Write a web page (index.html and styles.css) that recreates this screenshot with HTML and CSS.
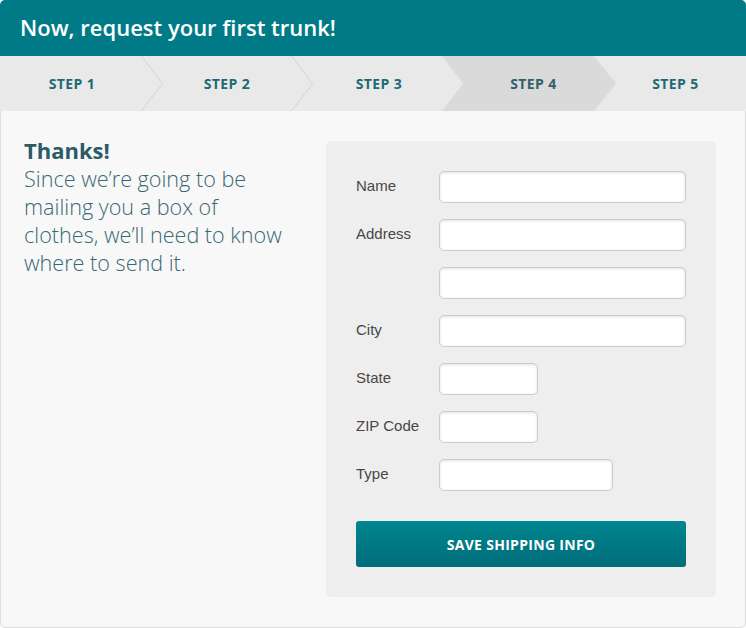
FILE: index.html
```html
<!DOCTYPE html>
<html>
<head>
<meta charset="utf-8">
<link rel="stylesheet" href="styles.css">
</head>
<body>
<div class="card">
  <header class="header">Now, request your first trunk!</header>
  <nav class="steps">
    <div class="step step-1">STEP 1<svg class="sep" width="22" height="55" viewBox="0 0 22 55"><polyline points="0.5,0 21.5,27.5 0.5,55" fill="none" stroke="#d3d3d3" stroke-width="1"/></svg></div>
    <div class="step step-2">STEP 2<svg class="sep" width="22" height="55" viewBox="0 0 22 55"><polyline points="0.5,0 21.5,27.5 0.5,55" fill="none" stroke="#d3d3d3" stroke-width="1"/></svg></div>
    <div class="step step-3">STEP 3</div>
    <div class="step step-4 active"><span class="label">STEP 4</span></div>
    <div class="step step-5">STEP 5</div>
  </nav>
  <main class="main">
    <section class="intro">
      <h2 class="intro-title">Thanks!</h2>
      <p class="intro-text">Since we’re going to be mailing you a box of clothes, we’ll need to know where to send it.</p>
    </section>
    <form class="panel">
      <div class="fields">
        <label class="field-label">Name</label><input class="input" type="text">
        <label class="field-label">Address</label><input class="input" type="text">
        <span class="field-label"></span><input class="input" type="text">
        <label class="field-label">City</label><input class="input" type="text">
        <label class="field-label">State</label><input class="input input-sm" type="text">
        <label class="field-label">ZIP Code</label><input class="input input-sm" type="text">
        <label class="field-label">Type</label><input class="input input-md" type="text">
      </div>
      <button class="btn" type="button">SAVE SHIPPING INFO</button>
    </form>
  </main>
</div>
</body>
</html>
```

FILE: styles.css
```css
html, body {
  margin: 0;
  padding: 0;
  background: #ffffff;
}

.card {
  width: 746px;
  height: 628px;
  display: flex;
  flex-direction: column;
  font-family: "Open Sans", "DejaVu Sans", sans-serif;
}

.header {
  height: 56px;
  box-sizing: border-box;
  padding: 13px 20px 15px;
  background: #007a87;
  color: #ffffff;
  font-size: 22px;
  line-height: 28px;
  font-weight: 600;
  border-radius: 5px 5px 0 0;
}

.steps {
  display: flex;
  height: 55px;
  background: #e9e9e9;
}

.step {
  position: relative;
  box-sizing: border-box;
  height: 55px;
  line-height: 55px;
  text-align: center;
  font-size: 14px;
  font-weight: 700;
  letter-spacing: 0.4px;
  color: #1d6a76;
}

.step-1 { width: 152px; padding-right: 8px; }
.step-2 { width: 150px; }
.step-3 { width: 150px; padding-left: 4px; }
.step-4 { width: 153px; padding-left: 10px; }
.step-5 { flex: 1; }

.sep {
  position: absolute;
  top: 0;
  right: -11px;
  z-index: 1;
}

.step.active {
  color: #33606a;
}

.step.active::before {
  content: "";
  position: absolute;
  top: 0;
  bottom: 0;
  left: -10px;
  right: -11px;
  background: #dadada;
  clip-path: polygon(0 0, 152px 0, 174px 27.5px, 152px 55px, 0 55px, 21px 27.5px);
}

.step.active .label {
  position: relative;
}

.main {
  flex: 1;
  display: flex;
  align-items: flex-start;
  background: #f8f8f8;
  border: 1px solid #dddddd;
  border-top: none;
  border-radius: 0 0 5px 5px;
  padding: 0 29px 0 23px;
}

.intro {
  width: 302px;
  padding-top: 24px;
}

.intro-title {
  margin: 0;
  font-size: 22px;
  line-height: 30px;
  font-weight: 700;
  color: #2c5b67;
}

.intro-text {
  margin: 0;
  width: 268px;
  font-size: 21.6px;
  line-height: 28px;
  font-weight: 300;
  color: #386873;
}

.panel {
  width: 390px;
  box-sizing: border-box;
  margin: 30px 0 0;
  padding: 30px;
  background: #eeeeee;
  border-radius: 5px;
}

.fields {
  display: grid;
  grid-template-columns: 83px 1fr;
  grid-auto-rows: 32px;
  row-gap: 16px;
  align-items: center;
  justify-items: start;
}

.field-label {
  padding-bottom: 3px;
  font-family: "Liberation Sans", Arial, sans-serif;
  font-size: 15px;
  color: #474747;
}

.input {
  width: 247px;
  height: 32px;
  box-sizing: border-box;
  margin: 0;
  border: 1px solid #cccccc;
  border-radius: 5px;
  background: #ffffff;
  box-shadow: inset 0 1px 3px rgba(0, 0, 0, 0.12);
  outline: none;
}

.input-sm { width: 99px; }
.input-md { width: 174px; }

.btn {
  display: block;
  width: 330px;
  height: 46px;
  margin-top: 30px;
  border: none;
  border-radius: 3px;
  background: linear-gradient(to bottom, #00868f 0%, #006d7a 100%);
  color: #ffffff;
  font-family: "Open Sans", "DejaVu Sans", sans-serif;
  font-size: 14px;
  font-weight: 700;
  letter-spacing: 0.3px;
}
```
